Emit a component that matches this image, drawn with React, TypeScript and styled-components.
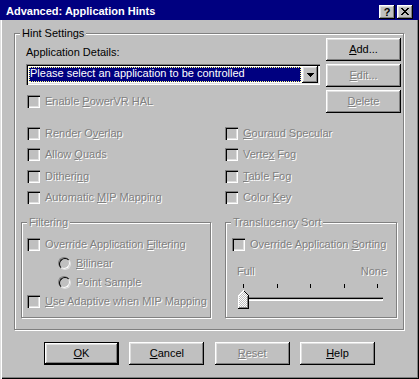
import styled, { createGlobalStyle } from 'styled-components';

const raised =
  'inset -1px -1px #000, inset 1px 1px #fff, inset -2px -2px #808080, inset 2px 2px #dfdfdf';
const sunken =
  'inset 1px 1px #808080, inset 2px 2px #000, inset -1px -1px #fff, inset -2px -2px #dfdfdf';

const GlobalStyle = createGlobalStyle`
  html, body { margin: 0; padding: 0; background: #c0c0c0; }
  * { box-sizing: border-box; }
`;

const Window = styled.div`
  width: 419px;
  height: 379px;
  display: flex;
  flex-direction: column;
  background: #c0c0c0;
  box-shadow: inset 1px 0 #dfdfdf, inset 2px 0 #fff, inset -1px -1px #000, inset -2px -2px #808080;
  font: 11px/13px "Liberation Sans", Arial, sans-serif;
  color: #000;
`;

const TitleBar = styled.div`
  height: 20px;
  display: flex;
  align-items: flex-start;
  padding: 5px 6px 0 6px;
  background: #000080;
  color: #fff;
  font-weight: bold;
`;

const Title = styled.div`
  flex: 1;
  line-height: 13px;
`;

const TitleButtons = styled.div`
  display: flex;
  gap: 2px;
`;

const TitleButton = styled.div`
  width: 16px;
  height: 14px;
  display: flex;
  align-items: center;
  justify-content: center;
  background: #c0c0c0;
  box-shadow: ${raised};
  color: #000;
  font-weight: bold;
  font-size: 11px;
  line-height: 12px;
  padding-bottom: 1px;
`;

const Body = styled.div`
  display: flex;
  flex-direction: column;
  padding: 13px 0 0 14px;
`;

const Group = styled.div<{ $w: number; $h: number; $pad: string }>`
  position: relative;
  width: ${p => p.$w}px;
  height: ${p => p.$h}px;
  flex: none;
  padding: ${p => p.$pad};
  border: 1px solid #808080;
  box-shadow: 1px 1px 0 #fff, inset 1px 1px 0 #fff;
  display: flex;
  flex-direction: column;
`;

const Legend = styled.div<{ $disabled?: boolean }>`
  position: absolute;
  top: -7px;
  left: 5px;
  padding: 0 2px;
  background: #c0c0c0;
  line-height: 13px;
  white-space: nowrap;
  color: ${p => (p.$disabled ? '#808080' : '#000')};
  text-shadow: ${p => (p.$disabled ? '1px 1px 0 #fff' : 'none')};
`;

const Text = styled.span<{ $disabled?: boolean }>`
  white-space: nowrap;
  line-height: 13px;
  color: ${p => (p.$disabled ? '#808080' : '#000')};
  text-shadow: ${p => (p.$disabled ? '1px 1px 0 #fff' : 'none')};
`;

const Mn = styled.span`
  text-decoration: underline;
  text-underline-offset: 1px;
`;

const TopRow = styled.div`
  display: grid;
  grid-template-columns: 294px 75px;
  column-gap: 6px;
  align-items: start;
`;

const TopLeft = styled.div`
  display: flex;
  flex-direction: column;
  padding-top: 8px;
`;

const Combo = styled.div`
  height: 21px;
  margin-top: 5px;
  display: flex;
  gap: 1px;
  padding: 2px;
  background: #fff;
  box-shadow: ${sunken};
`;

const ComboValue = styled.div`
  flex: 1;
  margin: 1px 0 1px 1px;
  border: 1px dotted #ffff7f;
  background: #000080;
  color: #fff;
  line-height: 11px;
  white-space: nowrap;
  overflow: hidden;
`;

const DropButton = styled.div`
  width: 16px;
  height: 17px;
  display: flex;
  align-items: center;
  justify-content: center;
  background: #c0c0c0;
  box-shadow: ${raised};
`;

const ButtonStack = styled.div`
  display: flex;
  flex-direction: column;
  gap: 3px;
`;

const Button = styled.div<{ $default?: boolean; $disabled?: boolean }>`
  width: 75px;
  height: 23px;
  flex: none;
  display: flex;
  align-items: center;
  justify-content: center;
  background: #c0c0c0;
  box-shadow: ${p =>
    p.$default
      ? 'inset 0 0 0 1px #000, inset -2px -2px #000, inset 2px 2px #fff, inset -3px -3px #808080, inset 3px 3px #dfdfdf'
      : raised};
  color: ${p => (p.$disabled ? '#808080' : '#000')};
  text-shadow: ${p => (p.$disabled ? '1px 1px 0 #fff' : 'none')};
  padding-bottom: 1px;
`;

const Check = styled.div<{ $top?: number; $indent?: number }>`
  display: flex;
  align-items: flex-start;
  gap: 5px;
  height: 13px;
  margin-top: ${p => p.$top ?? 0}px;
  padding-left: ${p => p.$indent ?? 0}px;
`;

const Box = styled.span`
  width: 13px;
  height: 13px;
  flex: none;
  background: #c0c0c0;
  box-shadow: ${sunken};
`;

const Radio = styled.div`
  display: flex;
  align-items: center;
  gap: 6px;
  height: 13px;
  padding-left: 31px;
`;

const RadioDot = styled.span`
  width: 12px;
  height: 12px;
  flex: none;
  border-radius: 50%;
  border: 1px solid;
  border-color: #808080 #fff #fff #808080;
  background: #c0c0c0;

  &::before {
    content: '';
    display: block;
    width: 10px;
    height: 10px;
    border-radius: 50%;
    border: 1px solid;
    border-color: #000 #dfdfdf #dfdfdf #000;
  }
`;

const OptionGrid = styled.div`
  display: grid;
  grid-template-columns: 198px 1fr;
  grid-auto-rows: 13px;
  row-gap: 8.33px;
  margin-top: 14px;
  padding-left: 1px;
`;

const SubGroups = styled.div`
  display: flex;
  gap: 14px;
  margin: 18px 0 0 -5px;
`;

const Stack = styled.div`
  display: flex;
  flex-direction: column;
  gap: 6px;
`;

const SliderLabels = styled.div`
  width: 150px;
  display: flex;
  justify-content: space-between;
  margin: 14px 0 0 5px;
`;

const Ticks = styled.div`
  width: 135px;
  height: 4px;
  display: flex;
  justify-content: space-between;
  margin: 6px 0 0 11px;
`;

const Tick = styled.span`
  width: 1px;
  height: 4px;
  background: #000;
`;

const Track = styled.div`
  position: relative;
  width: 142px;
  height: 4px;
  margin: 9px 0 0 9px;
  box-shadow: inset 1px 1px #808080, inset 2px 2px #000, inset -1px -1px #fff, inset -2px -2px #dfdfdf;
`;

const Thumb = styled.svg`
  position: absolute;
  top: -7px;
  left: -3px;
`;

const Footer = styled.div`
  display: flex;
  gap: 10.33px;
  margin: 12px 0 0 30px;
`;

const closeCells = [
  [0, 0], [1, 0], [6, 0], [7, 0],
  [1, 1], [2, 1], [5, 1], [6, 1],
  [2, 2], [3, 2], [4, 2], [5, 2],
  [3, 3], [4, 3],
  [2, 4], [3, 4], [4, 4], [5, 4],
  [1, 5], [2, 5], [5, 5], [6, 5],
  [0, 6], [1, 6], [6, 6], [7, 6],
];

const CloseGlyph = () => (
  <svg width="8" height="7" viewBox="0 0 8 7" shapeRendering="crispEdges">
    {closeCells.map(([x, y]) => (
      <rect key={`${x}-${y}`} x={x} y={y} width="1" height="1" fill="#000" />
    ))}
  </svg>
);

const ArrowDown = () => (
  <svg width="7" height="4" viewBox="0 0 7 4" shapeRendering="crispEdges">
    <path d="M0 0h7v1H0zM1 1h5v1H1zM2 2h3v1H2zM3 3h1v1H3z" fill="#000" />
  </svg>
);

const SliderThumb = () => (
  <Thumb width="11" height="19" viewBox="0 0 11 19" shapeRendering="crispEdges">
    <defs>
      <pattern id="dither" width="2" height="2" patternUnits="userSpaceOnUse">
        <rect width="2" height="2" fill="#c0c0c0" />
        <rect width="1" height="1" fill="#fff" />
        <rect x="1" y="1" width="1" height="1" fill="#fff" />
      </pattern>
    </defs>
    <polygon points="0,5 5,0 11,6 11,19 0,19" fill="url(#dither)" />
    <path d="M0 5h1v13H0zM1 4h1v1H1zM2 3h1v1H2zM3 2h1v1H3zM4 1h1v1H4zM5 0h1v1H5z" fill="#fff" />
    <path d="M6 1h1v1H6zM7 2h1v1H7zM8 3h1v1H8zM9 4h1v1H9zM10 5h1v14H10zM0 18h10v1H0z" fill="#000" />
    <path d="M9 6h1v12H9zM1 17h8v1H1z" fill="#808080" />
  </Thumb>
);

type OptionProps = { label: React.ReactNode; top?: number; indent?: number };

const Option = ({ label, top, indent }: OptionProps) => (
  <Check $top={top} $indent={indent}>
    <Box />
    <Text $disabled>{label}</Text>
  </Check>
);

export default function App() {
  return (
    <>
      <GlobalStyle />
      <Window>
        <TitleBar>
          <Title>Advanced: Application Hints</Title>
          <TitleButtons>
            <TitleButton>?</TitleButton>
            <TitleButton>
              <CloseGlyph />
            </TitleButton>
          </TitleButtons>
        </TitleBar>

        <Body>
          <Group $w={390} $h={297} $pad="4px 0 0 11px">
            <Legend>Hint Settings</Legend>
            <TopRow>
              <TopLeft>
                <Text>Application Details:</Text>
                <Combo>
                  <ComboValue>Please select an application to be controlled</ComboValue>
                  <DropButton>
                    <ArrowDown />
                  </DropButton>
                </Combo>
                <Option
                  top={10}
                  indent={1}
                  label={<>Enable <Mn>P</Mn>owerVR HAL</>}
                />
              </TopLeft>
              <ButtonStack>
                <Button>
                  <span><Mn>A</Mn>dd...</span>
                </Button>
                <Button $disabled>
                  <span><Mn>E</Mn>dit...</span>
                </Button>
                <Button $disabled>
                  <span><Mn>D</Mn>elete</span>
                </Button>
              </ButtonStack>
            </TopRow>

            <OptionGrid>
              <Option label={<>Render O<Mn>v</Mn>erlap</>} />
              <Option label={<><Mn>G</Mn>ouraud Specular</>} />
              <Option label={<>Allow <Mn>Q</Mn>uads</>} />
              <Option label={<>Verte<Mn>x</Mn> Fog</>} />
              <Option label={<>Ditheri<Mn>n</Mn>g</>} />
              <Option label={<><Mn>T</Mn>able Fog</>} />
              <Option label={<>Automatic <Mn>M</Mn>IP Mapping</>} />
              <Option label={<>Color <Mn>K</Mn>ey</>} />
            </OptionGrid>

            <SubGroups>
              <Group $w={190} $h={96} $pad="15px 0 0 5px">
                <Legend $disabled>Filtering</Legend>
                <Stack>
                  <Option label={<>Override Application <Mn>F</Mn>iltering</>} />
                  <Radio>
                    <RadioDot />
                    <Text $disabled><Mn>B</Mn>ilinear</Text>
                  </Radio>
                  <Radio>
                    <RadioDot />
                    <Text $disabled>Point Sample</Text>
                  </Radio>
                  <Option label={<><Mn>U</Mn>se Adaptive when MIP Mapping</>} />
                </Stack>
              </Group>

              <Group $w={172} $h={96} $pad="15px 0 0 6px">
                <Legend $disabled>Translucency Sort</Legend>
                <Option label={<>Override Application <Mn>S</Mn>orting</>} />
                <SliderLabels>
                  <Text $disabled>Full</Text>
                  <Text $disabled>None</Text>
                </SliderLabels>
                <Ticks>
                  {[0, 1, 2, 3, 4].map(i => (
                    <Tick key={i} />
                  ))}
                </Ticks>
                <Track>
                  <SliderThumb />
                </Track>
              </Group>
            </SubGroups>
          </Group>

          <Footer>
            <Button $default>
              <span><Mn>O</Mn>K</span>
            </Button>
            <Button>
              <span><Mn>C</Mn>ancel</span>
            </Button>
            <Button $disabled>
              <span><Mn>R</Mn>eset</span>
            </Button>
            <Button>
              <span><Mn>H</Mn>elp</span>
            </Button>
          </Footer>
        </Body>
      </Window>
    </>
  );
}
